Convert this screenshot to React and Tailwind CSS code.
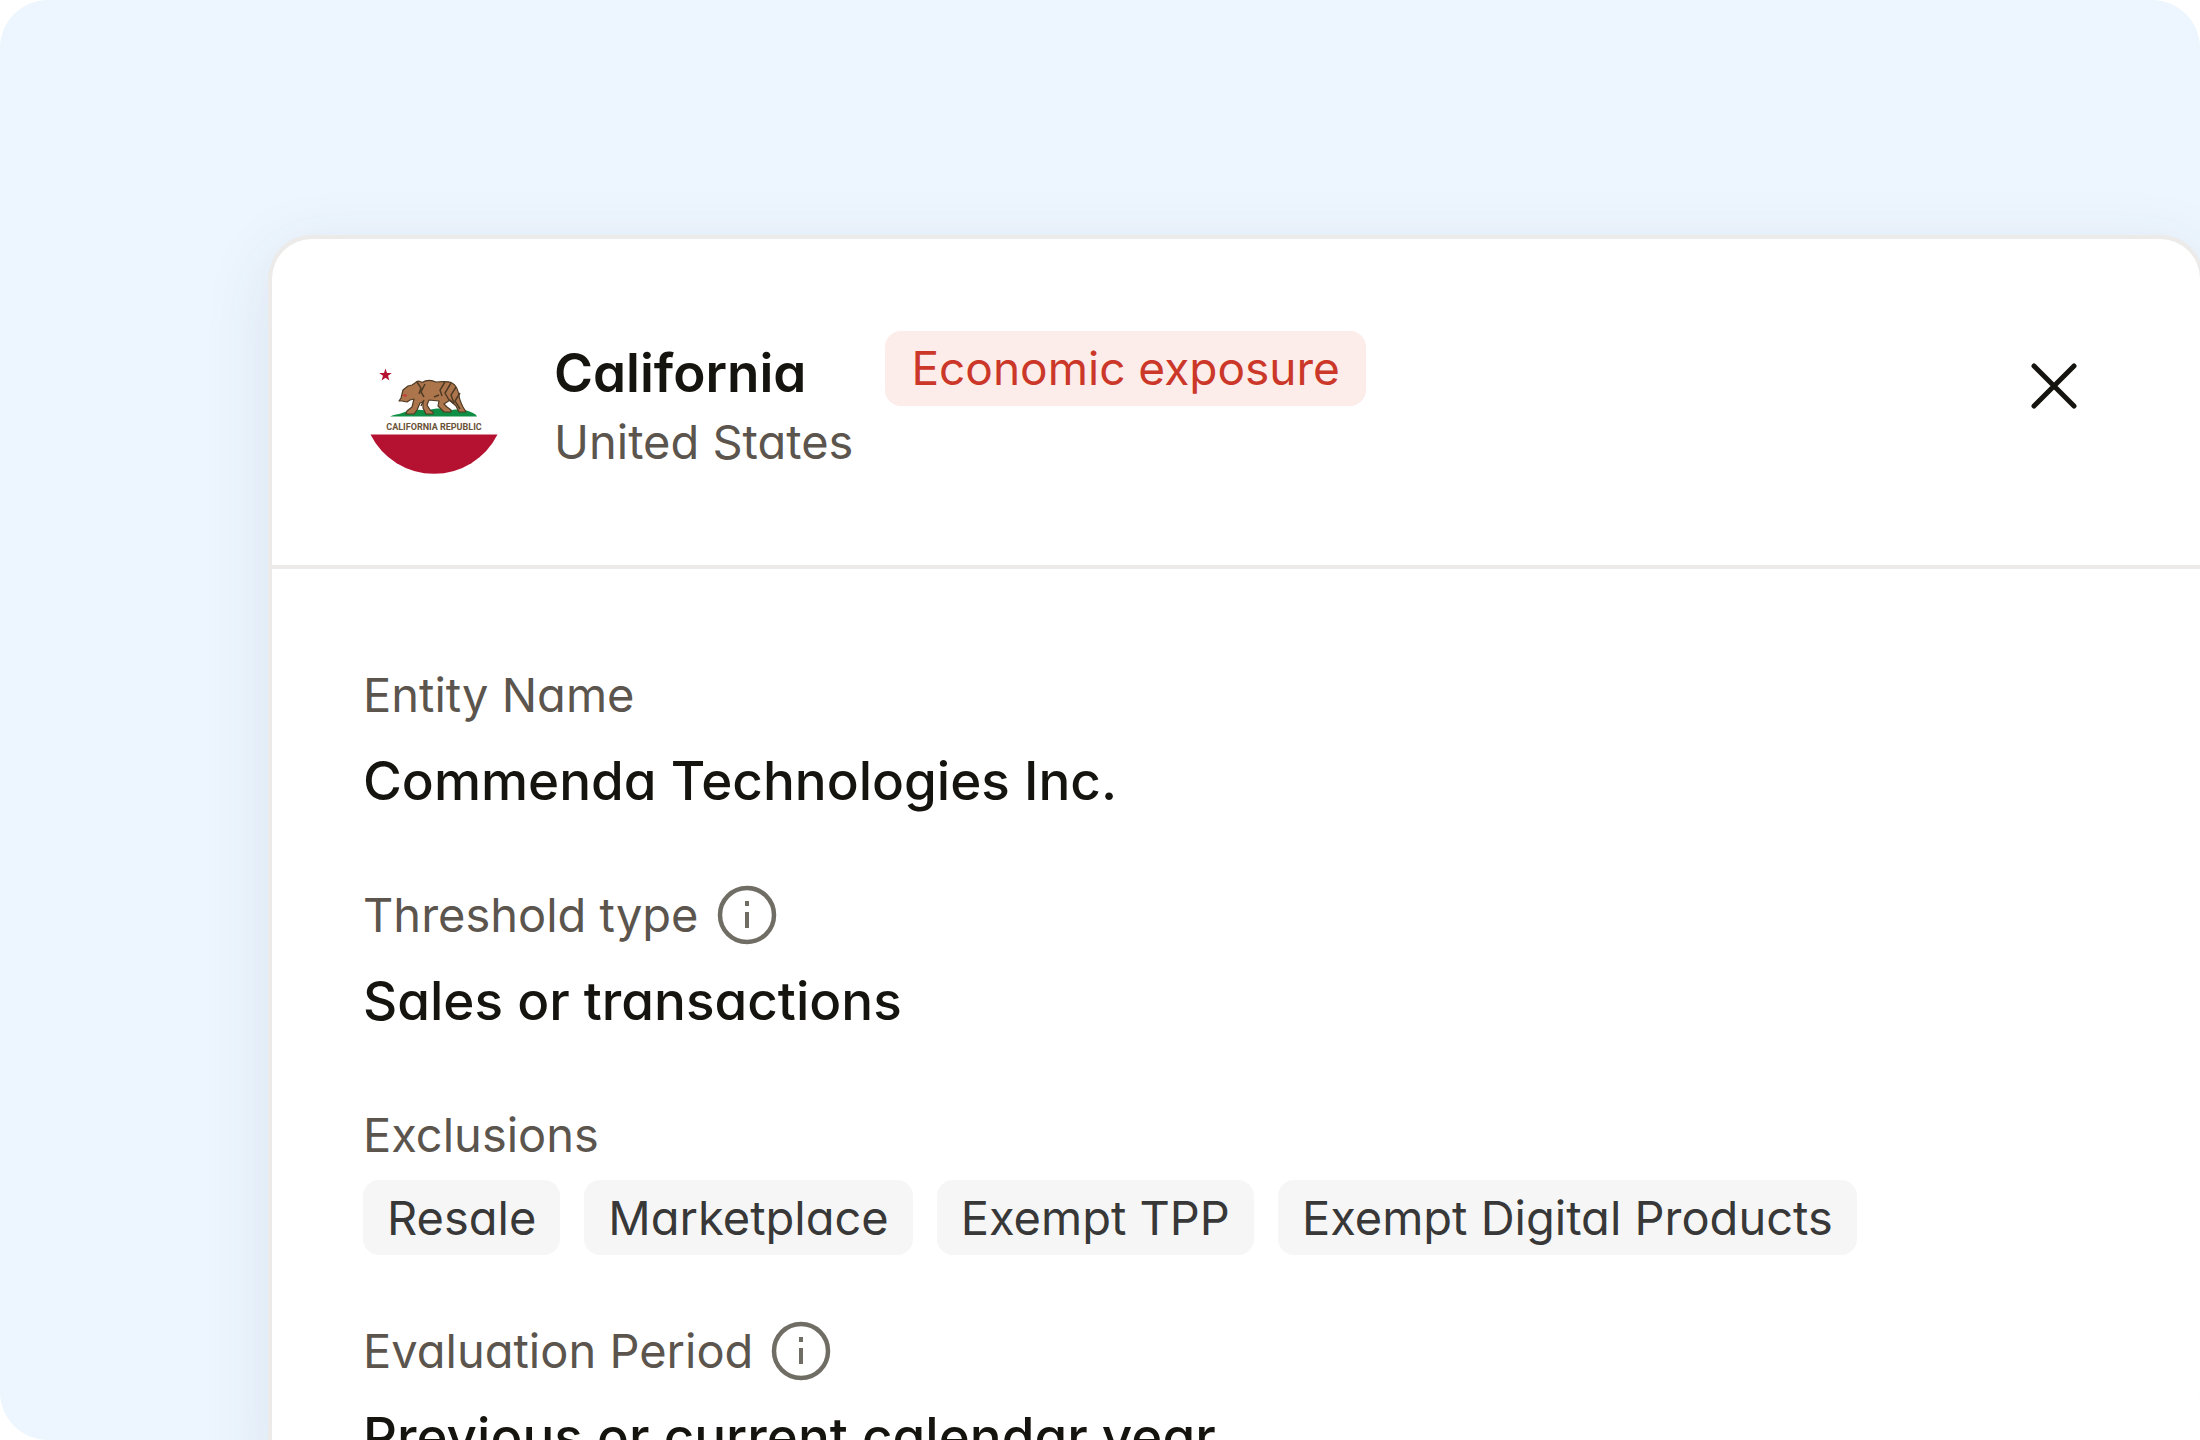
import React from "react";

function InfoIcon() {
  return (
    <svg viewBox="0 0 60 60" className="size-[60px] shrink-0" fill="none" aria-hidden="true">
      <circle cx="30" cy="30" r="27" stroke="#706d65" strokeWidth="4.5" />
      <rect x="28" y="16" width="4" height="5" fill="#706d65" />
      <rect x="28" y="27" width="4" height="16" fill="#706d65" />
    </svg>
  );
}

function CaliforniaFlag() {
  return (
    <svg viewBox="0 0 128 107" className="h-[107px] w-32 shrink-0" role="img" aria-label="Flag of California">
      <path d="M0.5 67.500H127.500A71 71 0 0 1 0.500 67.500Z" fill="#b51232" />
      <path
        d="M15.500 1.500l1.500 4.400h4.800l-3.800 2.900 1.400 4.700-3.900-2.800-3.900 2.800 1.400-4.700-3.800-2.900h4.800z"
        fill="#b51232"
      />
      <path
        d="M20 49.500c4-2 8-2 12-3.500 8-3 16-4 24-2.500 10-3 19-2.500 26-.5 8-1 15 0 20 2.500 2 1 4 1.500 5 4z"
        fill="#0f8f45"
      />
      <path
        d="M32 27l1-4 5-4 4-1 3-2c2-2.500 5-2 7-.5 4-2.500 9-3 14-.5 6-.5 12-1 16 1 4 2 6 7 7 12 0 4 2 8 4 12l3 5h-7l-3-6-6-6-6 4 3 3 4 3v2h-7l-6-6 1-5-10-1-2 5 3 5 3 2v2h-7l-3-6v-6l-3 1-3 7-3 4h-8l1-3 5-4 2-8-4 1-3 2-5-1-3 0 2-3z"
        fill="#ad754c"
        stroke="#4e3b25"
        strokeWidth="1.200"
        strokeLinejoin="round"
      />
      <path
        d="M47 15l4 6-2 6M55 17l-4 8 3 5M75 15l-5 8 2 6M81 16l-6 10 4 7M86 20l-5 8 3 8M90 26l-5 8 5 8M69 28l-5 2M54 33l-3 6M79 33l5 4"
        stroke="#4e3b25"
        strokeWidth="1.500"
        fill="none"
      />
      <path d="M32 28l4-1 1 2-2 1z" fill="#c63c3c" />
      <text
        x="64"
        y="63"
        textAnchor="middle"
        className="whitespace-pre font-['Liberation_Sans_Narrow','Roboto',sans-serif] text-[9px] font-bold"
        fill="#6a5238"
      >
        CALIFORNIA REPUBLIC
      </text>
    </svg>
  );
}

function Field({ label, info, children }) {
  return (
    <div className="flex flex-col">
      <dt className="flex h-[60px] items-center gap-[18px] text-[47px] leading-[60px] text-[#5b554e]">
        {label}
        {info && (
          <button type="button" aria-label={`About ${label}`} className="shrink-0">
            <InfoIcon />
          </button>
        )}
      </dt>
      {children}
    </div>
  );
}

function Value({ children }) {
  return <dd className="mt-[18px] text-[53px] font-medium leading-[76px] text-[#15140f]">{children}</dd>;
}

const exclusions = ["Resale", "Marketplace", "Exempt TPP", "Exempt Digital Products"];

export default function App() {
  return (
    <div className="bg-white font-['Inter',sans-serif] [font-feature-settings:'cv11']">
      <main className="flex h-screen flex-col overflow-hidden rounded-[48px] bg-[#edf6fe] pl-[268px] pt-[235px]">
        <section className="-mr-1 flex-1 rounded-t-[44px] border-4 border-b-0 border-[#ecebea] bg-white shadow-[0_16px_68px_rgba(60,70,110,0.10)]">
          <header className="flex items-start border-b-4 border-[#ecebea] px-[98px] pb-[91px] pt-[92px]">
            <div className="flex flex-1 items-start gap-14">
              <div className="pt-9">
                <CaliforniaFlag />
              </div>
              <div className="pt-1">
                <h1 className="text-[53px] font-semibold leading-[76px] text-[#15140f]">California</h1>
                <p className="text-[47px] leading-[62px] text-[#5b554e]">United States</p>
              </div>
              <span className="-ml-6 rounded-2xl bg-[#fcecea] px-[26px] text-[46px] leading-[75px] text-[#cb3829]">
                Economic exposure
              </span>
            </div>
            <button type="button" aria-label="Close" className="mr-6 mt-[31px]">
              <svg viewBox="0 0 48 48" className="size-12" fill="none" stroke="#15140f" strokeWidth="5" strokeLinecap="round" aria-hidden="true">
                <path d="M4 4l40 40M44 4L4 44" />
              </svg>
            </button>
          </header>
          <dl className="flex flex-col gap-[66px] px-[91px] pt-24">
            <Field label="Entity Name">
              <Value>Commenda Technologies Inc.</Value>
            </Field>
            <Field label="Threshold type" info>
              <Value>Sales or transactions</Value>
            </Field>
            <Field label="Exclusions">
              <dd className="mt-[15px] flex gap-6">
                {exclusions.map((name) => (
                  <span key={name} className="rounded-2xl bg-[#f6f6f6] px-6 text-[47px] leading-[75px] text-[#383838]">
                    {name}
                  </span>
                ))}
              </dd>
            </Field>
            <Field label="Evaluation Period" info>
              <Value>Previous or current calendar year</Value>
            </Field>
          </dl>
        </section>
      </main>
    </div>
  );
}
